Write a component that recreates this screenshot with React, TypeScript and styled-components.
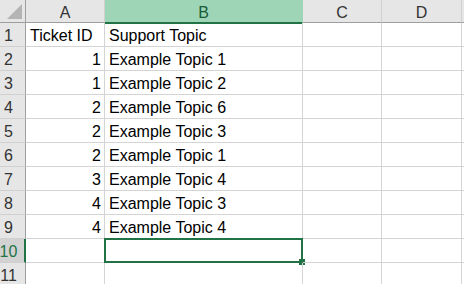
import styled, { createGlobalStyle } from 'styled-components';

const GlobalStyle = createGlobalStyle`
  html, body {
    margin: 0;
    padding: 0;
    background: #ffffff;
    overflow: hidden;
  }
`;

const rows: [number | null, string][] = [
  [1, 'Example Topic 1'],
  [1, 'Example Topic 2'],
  [2, 'Example Topic 6'],
  [2, 'Example Topic 3'],
  [2, 'Example Topic 1'],
  [3, 'Example Topic 4'],
  [4, 'Example Topic 3'],
  [4, 'Example Topic 4'],
];

const columns = ['A', 'B', 'C', 'D'];
const activeCol = 'B';
const activeRow = 10;

const Sheet = styled.div`
  display: grid;
  grid-template-columns: 26px 79px 198px 79px 80px 1fr;
  grid-template-rows: 23px;
  grid-auto-rows: 24px;
  width: 464px;
  height: 284px;
  overflow: hidden;
  font-family: 'Liberation Sans', Arial, sans-serif;
  font-size: 16px;
  line-height: 18px;
`;

const Corner = styled.div`
  position: relative;
  background: #e6e6e6;
  border-right: 1px solid #9f9f9f;
  border-bottom: 1px solid #9f9f9f;
  box-sizing: border-box;

  svg {
    position: absolute;
    left: 7px;
    top: 4px;
  }
`;

const ColHeader = styled.div<{ $active?: boolean }>`
  display: flex;
  align-items: center;
  justify-content: center;
  box-sizing: border-box;
  padding-top: 4px;
  color: ${p => (p.$active ? '#185c37' : '#333333')};
  background: ${p => (p.$active ? '#9fd5b7' : '#e6e6e6')};
  border-right: 1px solid ${p => (p.$active ? '#9fd5b7' : '#d0d0d0')};
  border-bottom: ${p => (p.$active ? '2px solid #217346' : '1px solid #9f9f9f')};
  margin-bottom: ${p => (p.$active ? '-1px' : '0')};
`;

const RowHeader = styled.div<{ $active?: boolean }>`
  display: flex;
  align-items: flex-end;
  justify-content: center;
  box-sizing: border-box;
  padding: 0 ${p => (p.$active ? '7px' : '8px')} 1px 0;
  color: ${p => (p.$active ? '#217346' : '#333333')};
  background: ${p => (p.$active ? '#d2d2d2' : '#e6e6e6')};
  border-right: ${p => (p.$active ? '2px solid #217346' : '1px solid #9f9f9f')};
  border-bottom: 1px solid #d0d0d0;
  white-space: nowrap;
`;

const Cell = styled.div<{ $align?: 'left' | 'right' }>`
  position: relative;
  display: flex;
  align-items: flex-end;
  justify-content: ${p => (p.$align === 'right' ? 'flex-end' : 'flex-start')};
  box-sizing: border-box;
  padding: 0 3px 1px 4px;
  color: #000000;
  white-space: nowrap;
  border-right: 1px solid #d4d4d4;
  border-bottom: 1px solid #d4d4d4;
`;

const Selection = styled.div`
  position: absolute;
  left: -1px;
  top: -1px;
  right: -1px;
  bottom: -1px;
  border: 2px solid #217346;
  pointer-events: none;
`;

const Handle = styled.div`
  position: absolute;
  right: -4px;
  bottom: -4px;
  width: 6px;
  height: 6px;
  background: #217346;
`;

const Spreadsheet = () => {
  const body: [string, string][] = [
    ['Ticket ID', 'Support Topic'],
    ...rows.map(([id, topic]) => [id === null ? '' : String(id), topic] as [string, string]),
  ];
  while (body.length < 11) body.push(['', '']);

  return (
    <Sheet>
      <Corner>
        <svg width="15" height="15" viewBox="0 0 15 15">
          <polygon points="15,0 15,15 0,15" fill="#b4b4b4" />
        </svg>
      </Corner>
      {columns.map(c => (
        <ColHeader key={c} $active={c === activeCol}>{c}</ColHeader>
      ))}
      <ColHeader />
      {body.map(([a, b], i) => {
        const n = i + 1;
        return [
          <RowHeader key={`h${n}`} $active={n === activeRow}>{n}</RowHeader>,
          <Cell key={`a${n}`} $align={n === 1 ? 'left' : 'right'}>{a}</Cell>,
          <Cell key={`b${n}`}>
            {b}
            {n === activeRow && (
              <Selection>
                <Handle />
              </Selection>
            )}
          </Cell>,
          <Cell key={`c${n}`} />,
          <Cell key={`d${n}`} />,
          <Cell key={`e${n}`} />,
        ];
      })}
    </Sheet>
  );
};

export default function App() {
  return (
    <>
      <GlobalStyle />
      <Spreadsheet />
    </>
  );
}
